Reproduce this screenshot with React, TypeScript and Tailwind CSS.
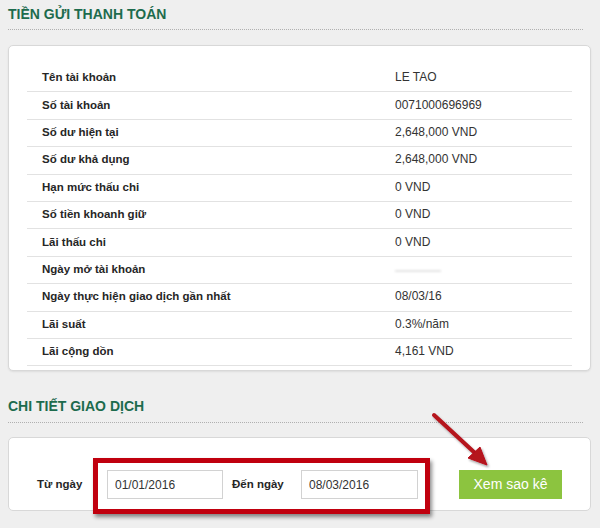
import React from "react";

const rows: [string, string][] = [
  ["Tên tài khoản", "LE TAO"],
  ["Số tài khoản", "0071000696969"],
  ["Số dư hiện tại", "2,648,000 VND"],
  ["Số dư khả dụng", "2,648,000 VND"],
  ["Hạn mức thấu chi", "0 VND"],
  ["Số tiền khoanh giữ", "0 VND"],
  ["Lãi thấu chi", "0 VND"],
  ["Ngày mở tài khoản", ""],
  ["Ngày thực hiện giao dịch gần nhất", "08/03/16"],
  ["Lãi suất", "0.3%/năm"],
  ["Lãi cộng dồn", "4,161 VND"],
];

function SectionTitle({ children, top }: { children: React.ReactNode; top: string }) {
  return (
    <div className={`${top} w-[575px] border-b border-dotted border-[#b0b0b0] text-[14px] font-bold leading-[16px] text-[#1d6b4d]`}>
      {children}
    </div>
  );
}

export default function App() {
  return (
    <div
      className="relative h-[528px] w-[600px] overflow-hidden bg-[#efefef] px-2"
      style={{ fontFamily: '"Liberation Sans", Arial, sans-serif' }}
    >
      <SectionTitle top="pt-[6px] pb-[7px]">TIỀN GỬI THANH TOÁN</SectionTitle>

      <div className="mt-[15px] w-[583px] rounded-[5px] border border-[#d8d8d8] bg-white px-[18px] pt-[19px] pb-[4px] shadow-[0_1px_2px_rgba(0,0,0,0.08)]">
        {rows.map(([label, value]) => (
          <div key={label} className="flex h-[27.4px] items-center border-b border-[#e2e2e2] pb-[2px] text-[12px] leading-[16px]">
            <div className="w-[368px] pl-[15px] text-[11.5px] font-bold text-[#262626]">{label}</div>
            <div className="text-[#333]">
              {value || <div className="mt-[4px] h-[2px] w-[46px] bg-[#e4e4e4] blur-[1px]" />}
            </div>
          </div>
        ))}
      </div>

      <SectionTitle top="mt-[27px] pb-[8px]">CHI TIẾT GIAO DỊCH</SectionTitle>

      <div className="mt-[14px] flex w-[583px] items-center rounded-[5px] border border-[#d8d8d8] bg-white pt-[32px] pb-[11px] pl-[28px] text-[11.5px]">
        <div className="w-[70px] font-bold text-[#262626]">Từ ngày</div>
        <input
          readOnly
          value="01/01/2016"
          className="h-[29px] w-[116px] border border-[#d2d2d2] pl-[7px] text-[12px] text-[#333] outline-none"
        />
        <div className="ml-[9px] w-[69px] font-bold text-[#262626]">Đến ngày</div>
        <input
          readOnly
          value="08/03/2016"
          className="h-[29px] w-[117px] border border-[#d2d2d2] pl-[7px] text-[12px] text-[#333] outline-none"
        />
        <button className="ml-[41px] h-[29px] w-[103px] bg-[#8cc43f] text-[14px] text-white">Xem sao kê</button>
      </div>

      {/* annotation overlay */}
      <div className="pointer-events-none absolute top-[458px] left-[93px] h-[56px] w-[337px] border-[5px] border-[#c0000e] shadow-[2px_3px_4px_rgba(0,0,0,0.45)]" />
      <svg className="pointer-events-none absolute top-0 left-0" width="600" height="528">
        <defs>
          <filter id="sh" x="-20%" y="-20%" width="140%" height="140%">
            <feDropShadow dx="1.5" dy="2" stdDeviation="1.2" floodColor="#000" floodOpacity="0.35" />
          </filter>
        </defs>
        <g filter="url(#sh)" fill="#b5121b" stroke="#b5121b">
          <line x1="434" y1="415" x2="476" y2="454" strokeWidth="4" strokeLinecap="round" />
          <polygon points="487,465 468,458 480,447" strokeWidth="1" />
        </g>
      </svg>
    </div>
  );
}
